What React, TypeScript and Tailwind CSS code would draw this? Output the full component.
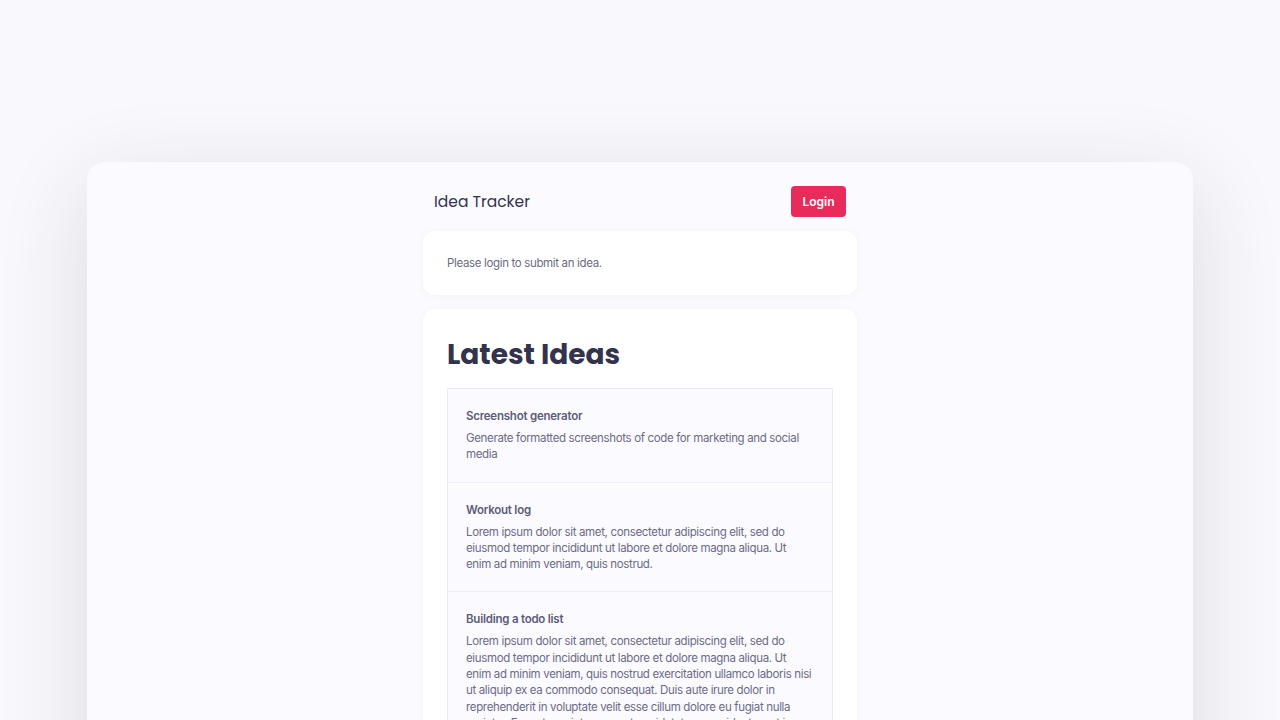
import React from "react";

const ideas = [
  {
    title: "Screenshot generator",
    body: "Generate formatted screenshots of code for marketing and social media",
  },
  {
    title: "Workout log",
    body: "Lorem ipsum dolor sit amet, consectetur adipiscing elit, sed do eiusmod tempor incididunt ut labore et dolore magna aliqua. Ut enim ad minim veniam, quis nostrud.",
  },
  {
    title: "Building a todo list",
    body: "Lorem ipsum dolor sit amet, consectetur adipiscing elit, sed do eiusmod tempor incididunt ut labore et dolore magna aliqua. Ut enim ad minim veniam, quis nostrud exercitation ullamco laboris nisi ut aliquip ex ea commodo consequat. Duis aute irure dolor in reprehenderit in voluptate velit esse cillum dolore eu fugiat nulla pariatur. Excepteur sint occaecat cupidatat non proident, sunt in culpa qui officia deserunt mollit anim id est laborum.",
  },
];

export default function App() {
  return (
    <div className="h-[720px] w-[1280px] overflow-hidden bg-[#f9f8fc] font-['Inter',sans-serif]">
      <div className="pt-[162px] px-[87px]">
        <div className="h-[700px] rounded-[18px] bg-[#fbfaff] shadow-[0_24px_90px_rgba(40,40,60,0.14)]">
          <div className="mx-auto w-[434px] pt-[24px]">
            <header className="flex h-[31px] items-center justify-between px-[11px]">
              <h1 className="font-['Poppins','Lato',sans-serif] text-[15.5px] font-normal text-[#33334d]">
                Idea Tracker
              </h1>
              <button className="h-[31px] w-[55px] rounded-[4px] bg-[#e92b5c] text-[12px] font-semibold text-white">
                Login
              </button>
            </header>

            <div className="mt-[14px] flex h-[64px] items-center rounded-[12px] bg-white px-[24px] pt-[2px] shadow-[0_1px_8px_rgba(40,40,80,0.04)]">
              <p className="text-[11.5px] tracking-[-0.03em] text-[#6b6b85]">Please login to submit an idea.</p>
            </div>

            <div className="mt-[14px] rounded-[12px] bg-white px-[24px] pt-[26px] pb-[24px] shadow-[0_1px_8px_rgba(40,40,80,0.04)]">
              <h2 className="mb-[13px] h-[40px] font-['Poppins','Lato',sans-serif] text-[28px] font-bold leading-[40px] text-[#33334d]">
                Latest Ideas
              </h2>
              <ul className="border border-[#ebeaf2] bg-[#fbfaff]">
                {ideas.map((idea, i) => (
                  <li
                    key={idea.title}
                    className={`px-[18px] pt-[19px] pb-[19px] ${i > 0 ? "border-t border-[#efeef5]" : ""}`}
                  >
                    <h3 className="text-[11.5px] font-semibold leading-[16px] tracking-[-0.02em] text-[#5d5d77]">
                      {idea.title}
                    </h3>
                    <p className="mt-[6px] text-[11.5px] leading-[16.3px] tracking-[-0.03em] text-[#6b6b85]">
                      {idea.body}
                    </p>
                  </li>
                ))}
              </ul>
            </div>
          </div>
        </div>
      </div>
    </div>
  );
}
